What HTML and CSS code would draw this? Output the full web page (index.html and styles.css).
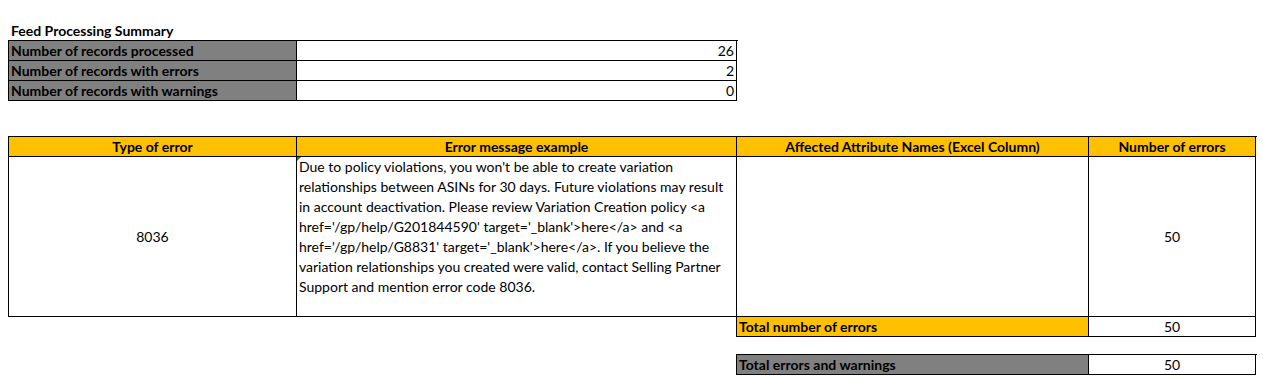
FILE: index.html
```html
<!DOCTYPE html>
<html>
<head>
<meta charset="utf-8">
<link rel="stylesheet" href="styles.css">
</head>
<body>
<div class="sheet">
  <div class="title">Feed Processing Summary</div>
  <div class="summary">
    <div class="cell label gray">Number of records processed</div>
    <div class="cell num">26</div>
    <div class="cell label gray">Number of records with errors</div>
    <div class="cell num">2</div>
    <div class="cell label gray">Number of records with warnings</div>
    <div class="cell num">0</div>
  </div>

  <div class="errors">
    <div class="cell head yellow">Type of error</div>
    <div class="cell head yellow">Error message example</div>
    <div class="cell head yellow">Affected Attribute Names (Excel Column)</div>
    <div class="cell head yellow">Number of errors</div>
    <div class="cell body center">8036</div>
    <div class="cell body message"><span class="flag"></span>Due to policy violations, you won't be able to create variation<br>relationships between ASINs for 30 days. Future violations may result<br>in account deactivation. Please review Variation Creation policy &lt;a<br>href='/gp/help/G201844590' target='_blank'&gt;here&lt;/a&gt; and &lt;a<br>href='/gp/help/G8831' target='_blank'&gt;here&lt;/a&gt;. If you believe the<br>variation relationships you created were valid, contact Selling Partner<br>Support and mention error code 8036.</div>
    <div class="cell body"></div>
    <div class="cell body center">50</div>
  </div>

  <div class="total first">
    <div class="cell label yellow">Total number of errors</div>
    <div class="cell center">50</div>
  </div>
  <div class="total second">
    <div class="cell label gray">Total errors and warnings</div>
    <div class="cell center">50</div>
  </div>
</div>
</body>
</html>
```
FILE: styles.css
```css
html, body {
  margin: 0;
  padding: 0;
  background: #ffffff;
}

.sheet {
  padding: 20px 0 0 8px;
  font-family: Lato, "Liberation Sans", sans-serif;
  font-size: 14px;
  color: #000000;
}

.title {
  height: 20px;
  line-height: 22px;
  padding-left: 3px;
  font-weight: bold;
}

.cell {
  box-sizing: border-box;
  border-right: 1px solid #000;
  border-bottom: 1px solid #000;
  height: 20px;
  line-height: 20px;
  white-space: nowrap;
  overflow: hidden;
}

.gray { background: #808080; }
.yellow { background: #ffc000; }

.label {
  font-weight: bold;
  padding-left: 2px;
}

.num {
  text-align: right;
  padding-right: 2px;
}

.center {
  text-align: center;
}

.summary {
  display: grid;
  grid-template-columns: 288px 440px;
  width: 729px;
  border-top: 1px solid #000;
  border-left: 1px solid #000;
}

.errors {
  margin-top: 35px;
  display: grid;
  grid-template-columns: 288px 440px 352px 167px;
  width: 1248px;
  border-top: 1px solid #000;
  border-left: 1px solid #000;
}

.head {
  font-weight: bold;
  text-align: center;
}

.body {
  height: 160px;
  line-height: 20px;
}

.body.center {
  display: flex;
  align-items: center;
  justify-content: center;
}

.message {
  position: relative;
  padding-left: 2px;
}

.flag {
  position: absolute;
  left: 0;
  top: 0;
  width: 0;
  height: 0;
  border-top: 4px solid #1e8a1e;
  border-right: 4px solid transparent;
}

.total {
  display: grid;
  grid-template-columns: 352px 167px;
  width: 520px;
  margin-left: 728px;
  border-left: 1px solid #000;
}

.total.second {
  margin-top: 17px;
  border-top: 1px solid #000;
}
```
